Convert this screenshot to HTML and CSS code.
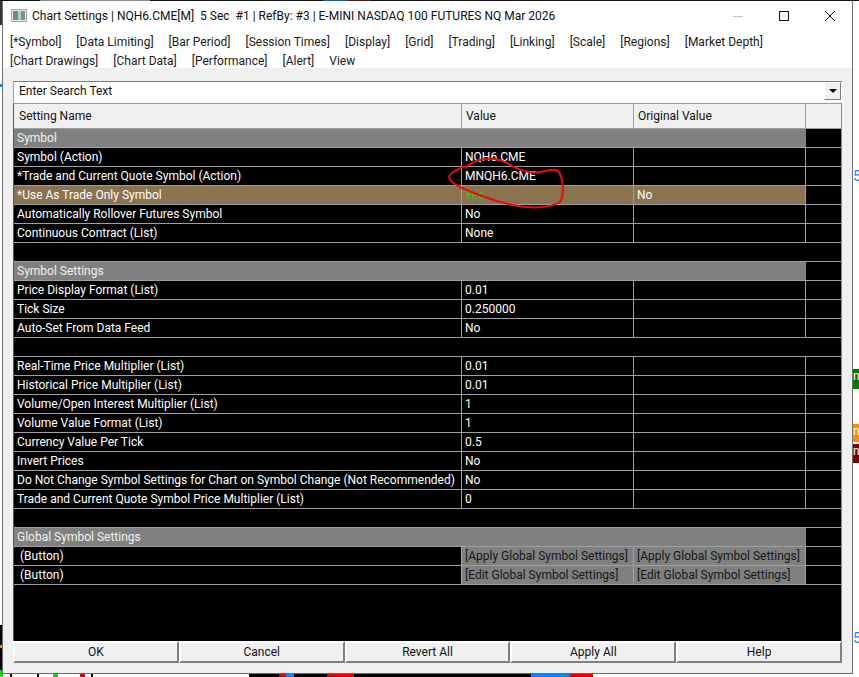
FILE: index.html
```html
<!DOCTYPE html>
<html lang="en">
<head>
  <meta charset="UTF-8" />
  <title>Chart Settings</title>
  <link rel="stylesheet" href="styles.css">
</head>
<body>

  <div class="window">
    <div class="titlebar">
      <svg class="app-icon" width="16" height="14" viewBox="0 0 16 14">
        <rect x="0.5" y="0.5" width="15" height="12" fill="#e8e8e8" stroke="#a8a8a8"/>
        <rect x="2" y="2" width="5" height="9" fill="#6f8796"/>
        <rect x="7" y="2" width="3" height="9" fill="#a9d6b8"/>
        <rect x="10" y="2" width="4" height="9" fill="#7d8f9c"/>
      </svg>
      <span class="title">Chart Settings | NQH6.CME[M]&nbsp; 5 Sec&nbsp; #1 | RefBy: #3 | E-MINI NASDAQ 100 FUTURES NQ Mar 2026</span>
      <div class="controls">
        <svg width="12" height="12" viewBox="0 0 12 12"><line x1="1" y1="6.5" x2="11" y2="6.5" stroke="#c4c4c4"/></svg>
        <svg width="12" height="12" viewBox="0 0 12 12"><rect x="1.5" y="1.5" width="9" height="9" fill="none" stroke="#111"/></svg>
        <svg width="12" height="12" viewBox="0 0 12 12"><path d="M1 1 L11 11 M11 1 L1 11" stroke="#111" fill="none"/></svg>
      </div>
    </div>

    <div class="menu">
      <div class="menu-row">
        <span>[*Symbol]</span><span>[Data Limiting]</span><span>[Bar Period]</span><span>[Session Times]</span><span>[Display]</span><span>[Grid]</span><span>[Trading]</span><span>[Linking]</span><span>[Scale]</span><span>[Regions]</span><span>[Market Depth]</span>
      </div>
      <div class="menu-row">
        <span>[Chart Drawings]</span><span>[Chart Data]</span><span>[Performance]</span><span>[Alert]</span><span>View</span>
      </div>
    </div>

    <div class="content">
      <div class="search">
        <div class="search-input">Enter Search Text</div>
        <div class="search-arrow"><i></i></div>
      </div>

      <div class="grid">
        <div class="row head">
          <div class="cell">Setting Name</div><div class="cell">Value</div><div class="cell">Original Value</div><div class="cell"></div>
        </div>

        <div class="row group"><div class="cell">Symbol</div><div class="cell end"></div></div>
        <div class="row"><div class="cell">Symbol (Action)</div><div class="cell">NQH6.CME</div><div class="cell"></div><div class="cell"></div></div>
        <div class="row"><div class="cell">*Trade and Current Quote Symbol (Action)</div><div class="cell">MNQH6.CME</div><div class="cell"></div><div class="cell"></div></div>
        <div class="row changed"><div class="cell">*Use As Trade Only Symbol</div><div class="cell yes">Yes</div><div class="cell">No</div><div class="cell end"></div></div>
        <div class="row"><div class="cell">Automatically Rollover Futures Symbol</div><div class="cell">No</div><div class="cell"></div><div class="cell"></div></div>
        <div class="row"><div class="cell">Continuous Contract (List)</div><div class="cell">None</div><div class="cell"></div><div class="cell"></div></div>
        <div class="row blank"></div>

        <div class="row group"><div class="cell">Symbol Settings</div><div class="cell end"></div></div>
        <div class="row"><div class="cell">Price Display Format (List)</div><div class="cell">0.01</div><div class="cell"></div><div class="cell"></div></div>
        <div class="row"><div class="cell">Tick Size</div><div class="cell">0.250000</div><div class="cell"></div><div class="cell"></div></div>
        <div class="row"><div class="cell">Auto-Set From Data Feed</div><div class="cell">No</div><div class="cell"></div><div class="cell"></div></div>
        <div class="row blank"></div>

        <div class="row"><div class="cell">Real-Time Price Multiplier (List)</div><div class="cell">0.01</div><div class="cell"></div><div class="cell"></div></div>
        <div class="row"><div class="cell">Historical Price Multiplier (List)</div><div class="cell">0.01</div><div class="cell"></div><div class="cell"></div></div>
        <div class="row"><div class="cell">Volume/Open Interest Multiplier (List)</div><div class="cell">1</div><div class="cell"></div><div class="cell"></div></div>
        <div class="row"><div class="cell">Volume Value Format (List)</div><div class="cell">1</div><div class="cell"></div><div class="cell"></div></div>
        <div class="row"><div class="cell">Currency Value Per Tick</div><div class="cell">0.5</div><div class="cell"></div><div class="cell"></div></div>
        <div class="row"><div class="cell">Invert Prices</div><div class="cell">No</div><div class="cell"></div><div class="cell"></div></div>
        <div class="row"><div class="cell">Do Not Change Symbol Settings for Chart on Symbol Change (Not Recommended)</div><div class="cell">No</div><div class="cell"></div><div class="cell"></div></div>
        <div class="row"><div class="cell">Trade and Current Quote Symbol Price Multiplier (List)</div><div class="cell">0</div><div class="cell"></div><div class="cell"></div></div>
        <div class="row blank"></div>

        <div class="row group"><div class="cell">Global Symbol Settings</div><div class="cell end"></div></div>
        <div class="row action"><div class="cell indent">(Button)</div><div class="cell btn">[Apply Global Symbol Settings]</div><div class="cell btn">[Apply Global Symbol Settings]</div><div class="cell"></div></div>
        <div class="row action"><div class="cell indent">(Button)</div><div class="cell btn">[Edit Global Symbol Settings]</div><div class="cell btn">[Edit Global Symbol Settings]</div><div class="cell"></div></div>
        <div class="filler"></div>
      </div>

      <div class="buttons">
        <button>OK</button><button>Cancel</button><button>Revert All</button><button>Apply All</button><button>Help</button>
      </div>
    </div>
  </div>

  <!-- pen mark drawn over the screenshot -->
  <svg class="scribble" width="859" height="677" viewBox="0 0 859 677">
    <path d="M465 168 C476 158 492 156 507 163 C518 170 528 174 540 172 C549 170 556 168 559 172 C564 182 564 196 560 202 C550 208 530 209 512 205 C495 201 478 195 462 188 C452 183 447 179 450 175 C453 171 458 169 465 166"/>
  </svg>

  <!-- bits of the chart behind the dialog, on the right -->
  <span class="chart-digit digit-a">5</span>
  <span class="chart-digit digit-b">5</span>
  <div class="chart-tag tag-green"><b>n</b></div>
  <div class="chart-tag tag-orange"><b>n</b></div>
  <div class="chart-tag tag-red"><b>n</b></div>

</body>
</html>
```

FILE: styles.css
```css
* {
  box-sizing: border-box;
}

html, body {
  height: 100%;
}

body {
  margin: 0;
  padding: 1px 0 0 2px;
  width: 859px;
  height: 677px;
  position: relative;
  overflow: hidden;
  font-family: Roboto, 'Noto Sans', sans-serif;
  font-size: 12px;
  color: #111;
  background-color: #fff;
  background-image:
    linear-gradient(90deg, #111 0 40px, #8a8a8a 40px 150px, #111 150px 323px, #1d5f94 323px 347px, #5a1a1a 347px 370px, #111 370px),
    linear-gradient(90deg, #19d419 0 3px, #fff 3px 10px, #000 10px 12px, #fff 12px 37px, #000 37px 39px, #fff 39px 53px, #19d419 53px 58px, #fff 58px 80px, #e00000 80px 85px, #fff 85px 91px, #000 91px 93px, #fff 93px 249px, #000 249px 279px, #e00000 279px 286px, #0a84ff 286px 294px, #000 294px 327px, #e00000 327px 354px, #000 354px 531px, #0a84ff 531px 569px, #e00000 571px 593px, #fff 593px),
    linear-gradient(180deg, #333 0 25px, #fff 25px 84px, #0a84ff 84px 87px, #fff 87px 625px, #000 625px 645px, #ff8c00 645px 648px, #000 648px 670px, #19d419 670px);
  background-size: 100% 1px, 100% 3px, 2px 100%;
  background-position: 0 0, 0 100%, 0 0;
  background-repeat: no-repeat;
}

.window {
  width: 851px;
  height: 673px;
  background: #f0f0f0;
  border: 1px solid #6e6e6e;
  border-top: 0;
}

.titlebar {
  display: flex;
  align-items: center;
  height: 29px;
  padding: 0 0 0 8px;
  background: #fff;
}

.app-icon {
  margin-right: 5px;
  flex: none;
}

.title {
  white-space: pre;
  flex: 1;
}

.controls {
  display: flex;
  gap: 34px;
  padding-right: 16px;
}

.menu {
  height: 38px;
  padding: 3px 0 0 7px;
  background: #fff;
}

.menu-row {
  display: flex;
  gap: 15px;
  height: 19px;
  line-height: 19px;
  color: #1a1a1a;
}

.content {
  padding: 13px 10px 0 10px;
}

.search {
  display: flex;
  height: 21px;
  margin-bottom: 1px;
  background: #fff;
  border-top: 1px solid #7a7a7a;
  border-left: 1px solid #a0a0a0;
}

.search-input {
  flex: 1;
  padding-left: 5px;
  line-height: 18px;
}

.search-arrow {
  width: 17px;
  height: 18px;
  margin-right: 1px;
  display: flex;
  align-items: center;
  justify-content: center;
  background: #f0f0f0;
  border: 1px solid;
  border-color: #fff #7a7a7a #7a7a7a #fff;
}

.search-arrow i {
  border: 4px solid transparent;
  border-top: 4px solid #000;
  border-bottom: 0;
}

.grid {
  display: flex;
  flex-direction: column;
  height: 538px;
  background: #000;
  color: #fff;
  border-left: 1px solid #5a5a5a;
  border-right: 1px solid #8a8a8a;
}

.row {
  display: grid;
  grid-template-columns: 448px 172px 172px 1fr;
  height: 19px;
  line-height: 19px;
  border-bottom: 1px solid #a0a0a0;
}

.cell {
  padding-left: 3px;
  white-space: nowrap;
  overflow: hidden;
  border-right: 1px solid #a0a0a0;
}

.cell:last-child {
  border-right: 0;
}

.head {
  height: 26px;
  line-height: 25px;
  background: #f0f0f0;
  color: #111;
  border-top: 1px solid #a0a0a0;
  border-bottom: 1px solid #a0a0a0;
}

.head .cell:first-child {
  padding-left: 5px;
}

.head .cell {
  padding-left: 4px;
}

.group {
  grid-template-columns: 792px 1fr;
  background: #808080;
  color: #f2f2f2;
}

.group .cell {
  border-right: 0;
}

.end {
  background: #000;
}

.changed {
  background: #8a734f;
}

.yes {
  color: #1fd11f;
}

.indent {
  padding-left: 6px;
}

.btn {
  background: #808080;
  color: #161616;
}

.filler {
  flex: 1;
}

.buttons {
  display: grid;
  grid-template-columns: repeat(5, 1fr);
  height: 22px;
}

.buttons button {
  margin: 0;
  padding: 0;
  font: inherit;
  color: #111;
  background: #f0f0f0;
  border: 2px solid;
  border-color: #fff #808080 #808080 #fff;
}

.scribble {
  position: absolute;
  left: 0;
  top: 0;
  pointer-events: none;
}

.scribble path {
  fill: none;
  stroke: #ec0a0a;
  stroke-width: 2;
}

.chart-digit {
  position: absolute;
  left: 853px;
  color: #0a84ff;
  font-size: 14px;
  line-height: 16px;
}

.digit-a {
  top: 168px;
}

.digit-b {
  top: 630px;
}

.chart-tag {
  position: absolute;
  left: 853px;
  width: 6px;
  text-align: center;
  color: #fff;
  overflow: hidden;
  font-size: 12px;
}

.chart-tag b {
  font-weight: 400;
}

.tag-green {
  top: 369px;
  height: 20px;
  background: #007a00;
}

.tag-orange {
  top: 424px;
  height: 18px;
  background: #ff8c00;
}

.tag-red {
  top: 444px;
  height: 19px;
  background: #7d0000;
}
```
